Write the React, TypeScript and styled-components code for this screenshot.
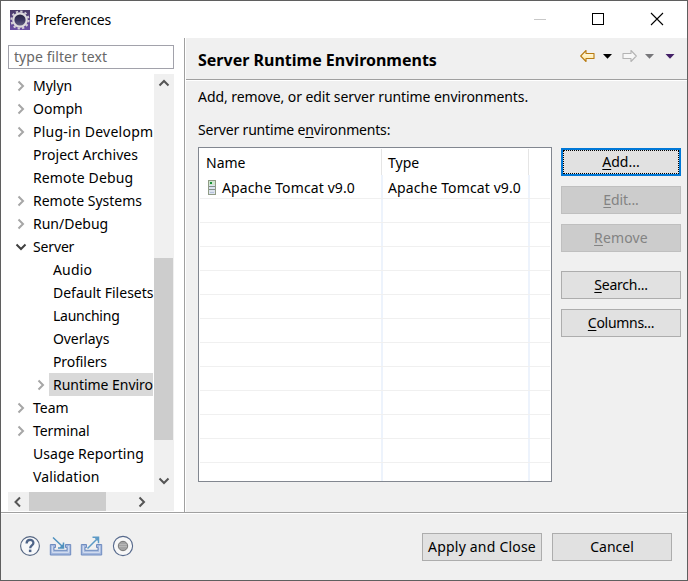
import React from "react";
import styled, { createGlobalStyle } from "styled-components";

const Global = createGlobalStyle`
  * { box-sizing: border-box; }
  body { margin: 0; }
`;

const Dialog = styled.div`
  width: 688px;
  height: 581px;
  display: flex;
  flex-direction: column;
  border: 1px solid #5f5f5f;
  background: #f0f0f0;
  color: #000;
  font: 14px/20px "Noto Sans", "Open Sans", sans-serif;
  white-space: nowrap;
  overflow: hidden;
`;

const Text = styled.span<{ $track?: number }>`
  letter-spacing: ${(p) => p.$track ?? 0}px;
  u { text-underline-offset: 2px; text-decoration-thickness: 1px; text-decoration-skip-ink: none; }
`;

const TitleBar = styled.header`
  flex: none;
  height: 37px;
  display: flex;
  align-items: center;
  padding: 0 1px 0 9px;
  background: #fff;
`;

const TitleText = styled(Text)`
  flex: 1;
  margin-left: 5px;
`;

const WindowButton = styled.button`
  width: 58.5px;
  height: 36px;
  display: grid;
  place-items: center;
  padding: 0 0 2px;
  border: 0;
  background: none;
`;

const Main = styled.div`
  flex: none;
  height: 474px;
  display: flex;
`;

const Sidebar = styled.aside`
  flex: none;
  width: 183px;
  padding: 7px 0 0 7px;
  background: #fff;
`;

const FilterInput = styled.input`
  display: block;
  width: 166px;
  height: 24px;
  margin-bottom: 5px;
  padding: 0 0 1px 5px;
  border: 1px solid #a2a2ab;
  font: inherit;
  letter-spacing: 0.07px;
  &::placeholder { color: #686868; opacity: 1; }
`;

const TreeViewport = styled.div`
  width: 166px;
  height: 418px;
  display: flex;
`;

const Tree = styled.ul`
  width: 146px;
  margin: 0;
  padding: 0;
  list-style: none;
`;

const TreeRow = styled.li<{ $level: number }>`
  height: 23px;
  display: flex;
  align-items: center;
  padding: 0 1px 0 ${(p) => 3 + p.$level * 20}px;
`;

const Expander = styled.span`
  flex: none;
  width: 18px;
  height: 23px;
  display: grid;
  place-items: center;
  padding-left: 2px;
`;

const TreeLabel = styled(Text)<{ $selected?: boolean }>`
  flex: 1;
  min-width: 0;
  height: 23px;
  padding-left: 4px;
  line-height: 23px;
  background: ${(p) => (p.$selected ? "#d9d9d9" : "none")};
`;

const VerticalScrollbar = styled.div`
  width: 20px;
  display: flex;
  flex-direction: column;
  background: #f0f0f0;
`;

const HorizontalScrollbar = styled.div`
  width: 166px;
  height: 19px;
  display: flex;
  background: #f0f0f0;
`;

const ScrollArrow = styled.span`
  flex: none;
  width: 20px;
  height: 19px;
  display: grid;
  place-items: center;
`;

const VerticalThumb = styled.div`
  width: 19px;
  height: 182px;
  margin: 165px 0 31px;
  background: #cdcdcd;
`;

const HorizontalThumb = styled.div`
  width: 77px;
  margin: 0 26px 0 1px;
  background: #cdcdcd;
`;

const Page = styled.main`
  flex: 1;
  border-left: 1px solid #a0a0a0;
  box-shadow: inset 1px 0 #fff;
`;

const PageHeader = styled.div`
  height: 43px;
  display: flex;
  align-items: center;
  justify-content: space-between;
  margin-left: 1px;
  padding: 2px 10px 0 12px;
  border-bottom: 1px solid #fff;
  box-shadow: inset 0 -1px #a0a0a0;
`;

const Heading = styled.h1`
  margin: 0;
  font-size: 16px;
  line-height: 22px;
`;

const Navigation = styled.nav`
  display: flex;
  align-items: center;
  padding-bottom: 8px;
`;

const PageBody = styled.section`
  padding: 6px 0 0 13px;
`;

const Description = styled.p`
  margin: 0 0 13px;
`;

const Runtimes = styled.div`
  display: flex;
  align-items: flex-start;
  margin-top: 7px;
`;

const Table = styled.div`
  width: 354px;
  height: 335px;
  padding: 1px;
  border: 1px solid #828790;
  background: #fff;
`;

const TableRow = styled.div<{ $header?: boolean }>`
  height: ${(p) => (p.$header ? 26 : 24)}px;
  display: grid;
  grid-template-columns: 183px 147px 1fr;
  border-bottom: ${(p) => (p.$header ? 0 : 1)}px solid #f0f0f0;
  &:last-child { height: 18px; border-bottom: 0; }
`;

const Cell = styled.div<{ $header?: boolean }>`
  display: flex;
  align-items: center;
  margin-right: ${(p) => (p.$header ? 1 : 0)}px;
  padding: ${(p) => (p.$header ? "1px 0 0 6px" : "2px 0 0 6px")};
  border-right: ${(p) => (p.$header ? "1px solid #e5e5e5" : "2px solid #edf3fc")};
  &:nth-child(2) { padding-left: 5px; }
  &:last-child { border-right: 0; }
`;

const RuntimeName = styled(Text)`
  margin-left: 4px;
`;

const Actions = styled.div`
  display: flex;
  flex-direction: column;
  gap: 10px;
  margin: 1px 0 0 9px;
`;

const Button = styled.button<{ $primary?: boolean; $spaced?: boolean }>`
  width: 120px;
  height: 28px;
  margin-top: ${(p) => (p.$spaced ? 9 : 0)}px;
  padding: 0;
  border: ${(p) => (p.$primary ? "2px solid #0078d7" : "1px solid #adadad")};
  outline: ${(p) => (p.$primary ? "1px dotted #000" : "none")};
  outline-offset: -3px;
  background: #e1e1e1;
  color: #000;
  font: inherit;
  &:disabled { background: #ccc; border-color: #bfbfbf; color: #838383; }
`;

const Footer = styled.footer`
  flex: 1;
  display: flex;
  justify-content: space-between;
  padding: 20px 15px 0 18px;
  border-top: 1px solid #a0a0a0;
  box-shadow: inset 0 1px #fff;
`;

const FooterGroup = styled.div<{ $gap: number }>`
  display: flex;
  gap: ${(p) => p.$gap}px;
`;

const FooterIcons = styled(FooterGroup)`
  padding-top: 2px;
`;

const EclipseIcon = () => (
  <svg width="20" height="20" viewBox="0 0 20 20">
    <defs>
      <linearGradient id="badge" x1="0" y1="0" x2="0" y2="1">
        <stop offset="0" stopColor="#4a3b68" />
        <stop offset="1" stopColor="#6c4fa5" />
      </linearGradient>
      <linearGradient id="core" x1="0" y1="0" x2="0" y2="1">
        <stop offset="0" stopColor="#23203a" />
        <stop offset="0.5" stopColor="#3b3560" />
        <stop offset="1" stopColor="#6a6788" />
      </linearGradient>
    </defs>
    <rect width="20" height="20" fill="url(#badge)" />
    <circle cx="10" cy="10" r="8.6" fill="none" stroke="#d5d0d8" strokeWidth="2" strokeDasharray="2.3 2.2" />
    <circle cx="10" cy="10" r="6.7" fill="url(#core)" stroke="#dedade" strokeWidth="2.2" />
  </svg>
);

type Direction = "up" | "down" | "left" | "right";
const chevronPaths: Record<Direction, string> = {
  up: "M1.5 7.5 L6 3 L10.5 7.5",
  down: "M1.5 3.5 L6 8 L10.5 3.5",
  left: "M8 1.5 L3.5 6 L8 10.5",
  right: "M3.5 1.5 L8 6 L3.5 10.5",
};

const Chevron = ({ direction, color = "#555", weight = 2 }: { direction: Direction; color?: string; weight?: number }) => (
  <svg width="12" height="12" viewBox="0 0 12 12">
    <path d={chevronPaths[direction]} fill="none" stroke={color} strokeWidth={weight} />
  </svg>
);

const NavigationIcons = () => (
  <svg width="98" height="14" viewBox="0 0 98 14">
    <defs>
      <linearGradient id="gold" x1="0" y1="0" x2="0" y2="1">
        <stop offset="0" stopColor="#fffdf2" />
        <stop offset="1" stopColor="#ffe595" />
      </linearGradient>
    </defs>
    <path d="M1.7 7 L7 1.5 V4.5 H15 V9.5 H7 V12.5 Z" fill="url(#gold)" stroke="#b87b12" strokeWidth="1.1" strokeLinejoin="round" />
    <path d="M24 5 H33 L28.5 9.8 Z" fill="#000" />
    <path d="M57.3 7 L52 1.5 V4.5 H44 V9.5 H52 V12.5 Z" fill="#f7f7f7" stroke="#b4b4b4" strokeWidth="1.1" strokeLinejoin="round" />
    <path d="M66 5 H75 L70.5 9.8 Z" fill="#77777a" />
    <path d="M86.5 5 H95.5 L91 9.8 Z" fill="#432067" />
  </svg>
);

const ServerIcon = () => (
  <svg width="12" height="16" viewBox="0 0 12 16">
    <rect x="2.5" y="0.5" width="7" height="14" fill="#dce3ee" stroke="#909b86" />
    <rect x="3" y="1" width="6" height="4" fill="#cfe6cf" />
    <rect x="4" y="2" width="2" height="2" fill="#189038" />
    <path d="M3 6.5 H9 M3 9.5 H9" stroke="#82918a" />
    <path d="M4 12.5 H8" stroke="#b6c1dc" />
  </svg>
);

const HelpIcon = () => (
  <svg width="22" height="22" viewBox="0 0 22 22">
    <circle cx="11" cy="11" r="9.4" fill="#f7f8fa" stroke="#566783" strokeWidth="1.1" />
    <path d="M7.6 8.6 C7.6 3.8 14.5 3.9 14.4 8 C14.3 10.4 11.2 10.3 11.2 13.2" fill="none" stroke="#4e6488" strokeWidth="2.3" />
    <rect x="9.9" y="14.6" width="2.5" height="2.5" fill="#4e6488" />
  </svg>
);

const TransferIcon = ({ outward }: { outward?: boolean }) => (
  <svg width="23" height="22" viewBox="0.5 0 23 22">
    <path d="M1.8 9.5 H7 V12.5 H5.5 V15.3 H18.5 V12.5 H17 V9.5 H22.2 V20 H1.8 Z" fill="#a3b7dd" stroke="#6f8cc0" />
    <path d="M3.8 11 V17.3 H20.2 V11" fill="none" stroke="#dbe4f4" />
    {outward ? (
      <path d="M8 13.5 L18.5 3 M13 2.3 H19 V8.3 M16 3 L18.3 5.3" fill="none" stroke="#5c9ac6" strokeWidth="1.5" />
    ) : (
      <path d="M4.5 2.5 L14.5 12 M15 7.5 V13 H9.5 M14.5 10 L12 12.5" fill="none" stroke="#4f91bf" strokeWidth="1.5" />
    )}
  </svg>
);

const RecordIcon = () => (
  <svg width="24" height="22" viewBox="-1 0 24 22">
    <circle cx="11" cy="11" r="9.6" fill="#f7f7f7" stroke="#56698c" strokeWidth="1.1" />
    <circle cx="11" cy="11" r="4.7" fill="#a3a3a3" stroke="#777" />
    <path d="M7.5 9.5 H14.5 M7 11.5 H15" stroke="#b8b8b8" />
  </svg>
);

interface Node {
  label: string;
  track: number;
  level?: number;
  state?: "closed" | "open";
  selected?: boolean;
}

const nodes: Node[] = [
  { label: "Mylyn", track: 0, state: "closed" },
  { label: "Oomph", track: 0, state: "closed" },
  { label: "Plug-in Developm", track: 0.25, state: "closed" },
  { label: "Project Archives", track: 0.03 },
  { label: "Remote Debug", track: 0.12 },
  { label: "Remote Systems", track: 0, state: "closed" },
  { label: "Run/Debug", track: 0, state: "closed" },
  { label: "Server", track: -0.15, state: "open" },
  { label: "Audio", track: 0.14, level: 1 },
  { label: "Default Filesets", track: 0, level: 1 },
  { label: "Launching", track: -0.25, level: 1 },
  { label: "Overlays", track: -0.1, level: 1 },
  { label: "Profilers", track: -0.1, level: 1 },
  { label: "Runtime Enviro", track: -0.03, level: 1, state: "closed", selected: true },
  { label: "Team", track: 0, state: "closed" },
  { label: "Terminal", track: -0.1, state: "closed" },
  { label: "Usage Reporting", track: 0.03 },
  { label: "Validation", track: 0.1 },
];

const emptyRows = Array.from({ length: 12 }, (_, i) => i);

export default function App() {
  return (
    <Dialog>
      <Global />
      <TitleBar>
        <EclipseIcon />
        <TitleText $track={-0.17}>Preferences</TitleText>
        <WindowButton aria-label="Minimize">
          <svg width="14" height="14"><path d="M1 7.5 H13" stroke="#c8c8c8" /></svg>
        </WindowButton>
        <WindowButton aria-label="Maximize">
          <svg width="14" height="14"><rect x="1.5" y="1.5" width="11" height="11" fill="none" stroke="#000" /></svg>
        </WindowButton>
        <WindowButton aria-label="Close">
          <svg width="14" height="14"><path d="M1 1 L13 13 M13 1 L1 13" stroke="#000" strokeWidth="1.1" /></svg>
        </WindowButton>
      </TitleBar>
      <Main>
        <Sidebar>
          <FilterInput placeholder="type filter text" />
          <TreeViewport>
            <Tree>
              {nodes.map((n) => (
                <TreeRow key={n.label} $level={n.level ?? 0}>
                  <Expander>
                    {n.state === "closed" && <Chevron direction="right" color="#a6a6a6" />}
                    {n.state === "open" && <Chevron direction="down" color="#404040" />}
                  </Expander>
                  <TreeLabel $track={n.track} $selected={n.selected}>{n.label}</TreeLabel>
                </TreeRow>
              ))}
            </Tree>
            <VerticalScrollbar>
              <ScrollArrow><Chevron direction="up" /></ScrollArrow>
              <VerticalThumb />
              <ScrollArrow><Chevron direction="down" /></ScrollArrow>
            </VerticalScrollbar>
          </TreeViewport>
          <HorizontalScrollbar>
            <ScrollArrow><Chevron direction="left" /></ScrollArrow>
            <HorizontalThumb />
            <ScrollArrow><Chevron direction="right" /></ScrollArrow>
          </HorizontalScrollbar>
        </Sidebar>
        <Page>
          <PageHeader>
            <Heading>Server Runtime Environments</Heading>
            <Navigation><NavigationIcons /></Navigation>
          </PageHeader>
          <PageBody>
            <Description>
              <Text $track={-0.07}>Add, remove, or edit server runtime environments.</Text>
            </Description>
            <Text $track={-0.18}>Server runtime e<u>n</u>vironments:</Text>
            <Runtimes>
              <Table>
                <TableRow $header>
                  <Cell $header><Text>Name</Text></Cell>
                  <Cell $header><Text>Type</Text></Cell>
                  <Cell />
                </TableRow>
                <TableRow>
                  <Cell>
                    <ServerIcon />
                    <RuntimeName $track={0.12}>Apache Tomcat v9.0</RuntimeName>
                  </Cell>
                  <Cell><Text $track={0.12}>Apache Tomcat v9.0</Text></Cell>
                  <Cell />
                </TableRow>
                {emptyRows.map((i) => (
                  <TableRow key={i}>
                    <Cell />
                    <Cell />
                    <Cell />
                  </TableRow>
                ))}
              </Table>
              <Actions>
                <Button $primary><Text><u>A</u>dd...</Text></Button>
                <Button disabled><Text $track={-0.15}><u>E</u>dit...</Text></Button>
                <Button disabled><Text $track={0.15}><u>R</u>emove</Text></Button>
                <Button $spaced><Text $track={-0.25}><u>S</u>earch...</Text></Button>
                <Button><Text $track={-0.3}><u>C</u>olumns...</Text></Button>
              </Actions>
            </Runtimes>
          </PageBody>
        </Page>
      </Main>
      <Footer>
        <FooterIcons $gap={8}>
          <HelpIcon />
          <TransferIcon />
          <TransferIcon outward />
          <RecordIcon />
        </FooterIcons>
        <FooterGroup $gap={10}>
          <Button><Text $track={0.2}>Apply and Close</Text></Button>
          <Button><Text>Cancel</Text></Button>
        </FooterGroup>
      </Footer>
    </Dialog>
  );
}
